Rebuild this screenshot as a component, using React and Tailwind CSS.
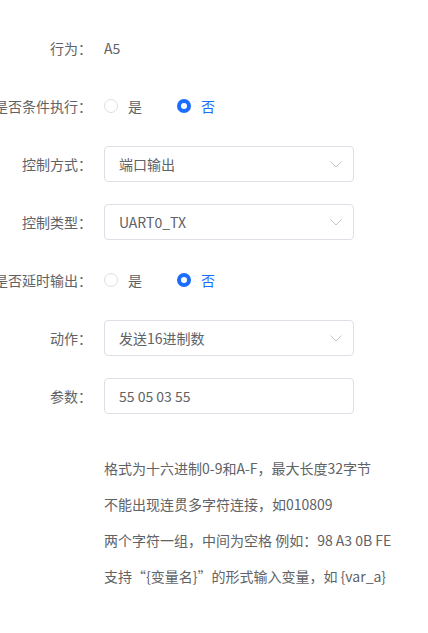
// Form for a single action row: label column on the left, control on the right.
import { useState } from 'react';

const FONT = { fontFamily: '"Noto Sans CJK SC", "Liberation Sans", sans-serif' };

function Row({ label, children }) {
  return (
    <div className="flex items-center h-9 mb-[22px]">
      <div className="w-[92px] shrink-0 flex justify-end">
        <span className="whitespace-nowrap text-sm text-[#606266]">{label}</span>
      </div>
      <div className="ml-3 flex items-center">{children}</div>
    </div>
  );
}

function Radio({ checked, label, onClick }) {
  return (
    <label className="flex items-center cursor-pointer mr-[35px]" onClick={onClick}>
      {checked ? (
        <span className="w-[14px] h-[14px] rounded-full bg-[#1a6dff] flex items-center justify-center">
          <span className="w-[6px] h-[6px] rounded-full bg-white" />
        </span>
      ) : (
        <span className="w-[14px] h-[14px] rounded-full border border-[#dcdfe6] bg-white" />
      )}
      <span className={`ml-[10px] text-sm ${checked ? 'text-[#1a6dff]' : 'text-[#606266]'}`}>{label}</span>
    </label>
  );
}

function Select({ value }) {
  return (
    <div className="w-[250px] h-9 border border-[#dcdfe6] rounded flex items-center justify-between pl-[14px] pr-[11px] bg-white">
      <span className="text-sm text-[#606266]">{value}</span>
      <svg width="12" height="7" viewBox="0 0 12 7" fill="none">
        <path d="M0.5 0.5 L6 6 L11.5 0.5" stroke="#c0c4cc" strokeWidth="1" />
      </svg>
    </div>
  );
}

const HELP = [
  '格式为十六进制0-9和A-F，最大长度32字节',
  '不能出现连贯多字符连接，如010809',
  '两个字符一组，中间为空格 例如：98 A3 0B FE',
  '支持“{变量名}”的形式输入变量，如 {var_a}',
];

export default function App() {
  const [cond, setCond] = useState(false);
  const [delay, setDelay] = useState(false);

  return (
    <div className="w-[428px] h-[633px] bg-white overflow-hidden pt-[30px]" style={FONT}>
      <Row label="行为：">
        <span className="text-sm text-[#606266]">A5</span>
      </Row>
      <Row label="是否条件执行：">
        <Radio checked={cond} label="是" onClick={() => setCond(true)} />
        <Radio checked={!cond} label="否" onClick={() => setCond(false)} />
      </Row>
      <Row label="控制方式：">
        <Select value="端口输出" />
      </Row>
      <Row label="控制类型：">
        <Select value="UART0_TX" />
      </Row>
      <Row label="是否延时输出：">
        <Radio checked={delay} label="是" onClick={() => setDelay(true)} />
        <Radio checked={!delay} label="否" onClick={() => setDelay(false)} />
      </Row>
      <Row label="动作：">
        <Select value="发送16进制数" />
      </Row>
      <Row label="参数：">
        <input
          defaultValue="55 05 03 55"
          className="w-[250px] h-9 border border-[#dcdfe6] rounded px-[14px] text-sm text-[#606266] outline-none"
        />
      </Row>
      <div className="ml-[104px] mt-[36px]">
        {HELP.map((t) => (
          <div key={t} className="text-sm leading-9 text-[#606266] whitespace-nowrap">{t}</div>
        ))}
      </div>
    </div>
  );
}
